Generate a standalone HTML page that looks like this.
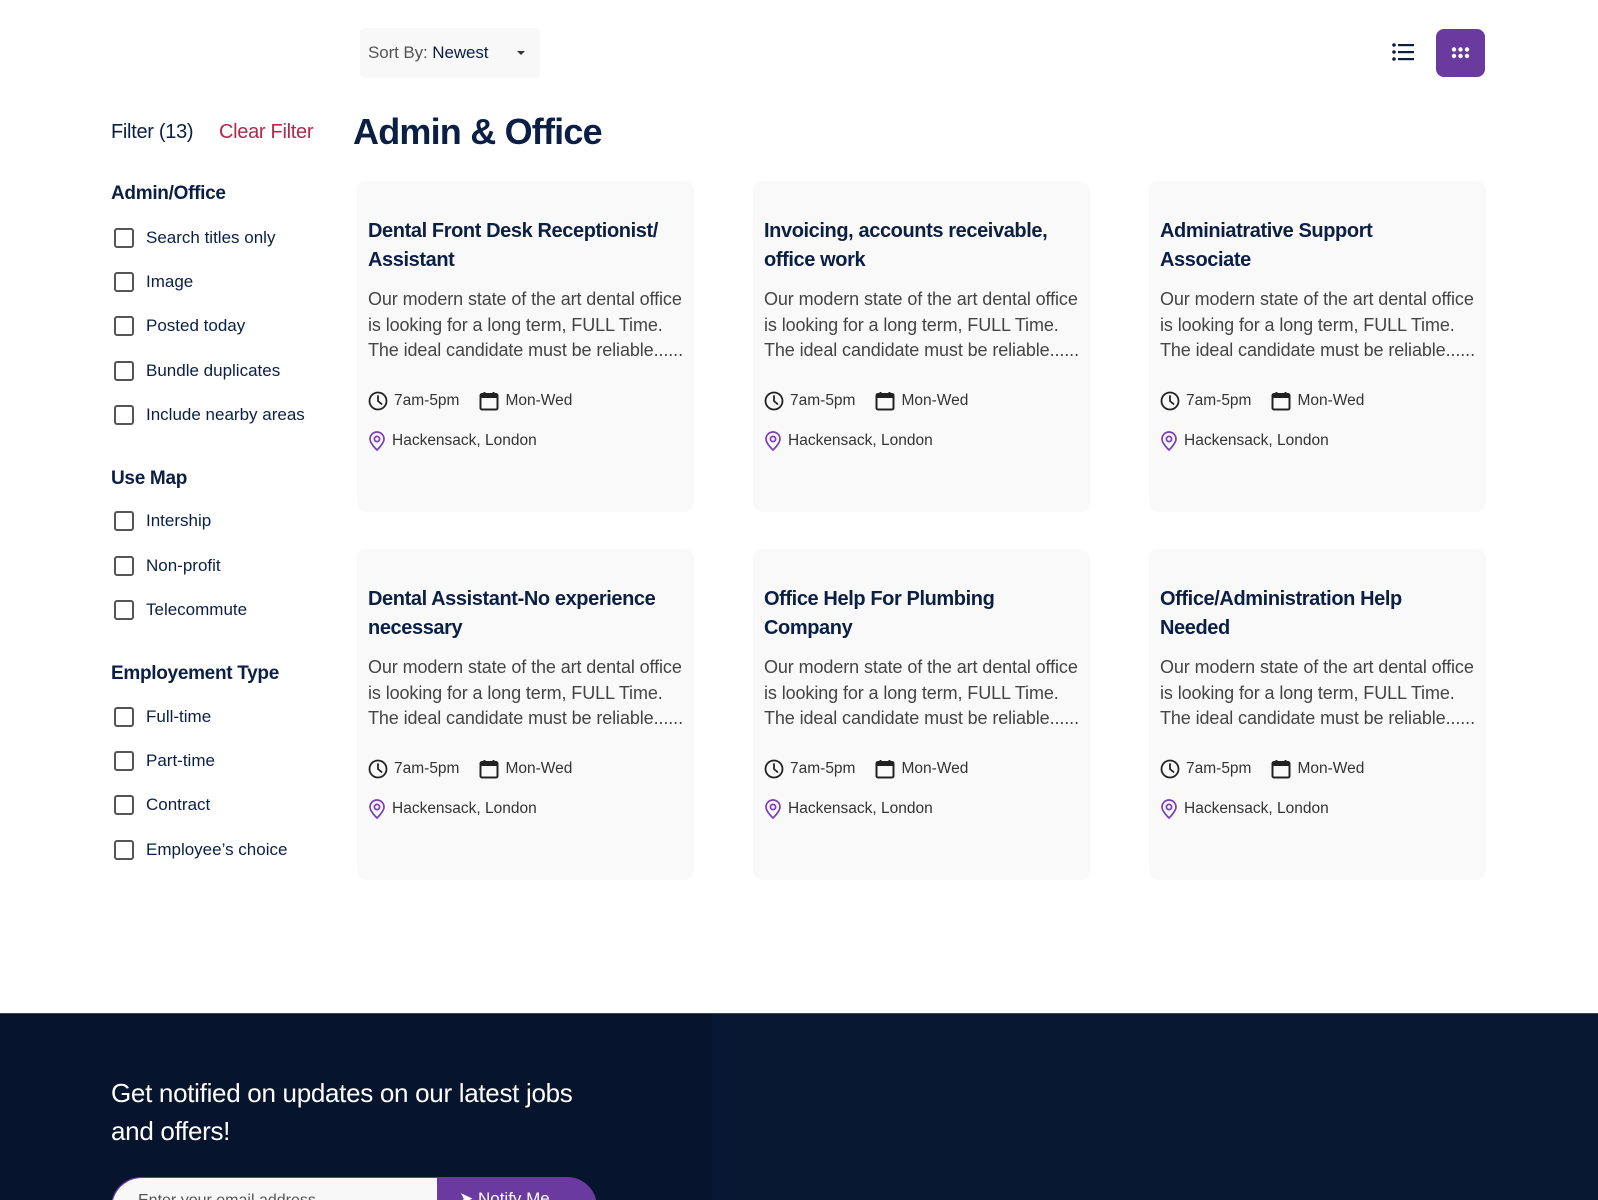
<!DOCTYPE html>
<html style="overflow:hidden;height:1200px"><head><meta charset="utf-8">
<style>
*{margin:0;padding:0;box-sizing:border-box}
body{width:1598px;height:1200px;overflow:hidden;background:#fff;font-family:"Liberation Sans",sans-serif;position:relative;color:#0b1f45}
.abs{position:absolute;white-space:nowrap}
.sort{left:360px;top:28px;width:180px;height:50px;background:#f8f8f8;border-radius:4px;font-size:17px;line-height:50px;padding-left:8px;color:#555;letter-spacing:-0.1px}
.sort b{font-weight:normal;color:#0b1f45}
.caret{position:absolute;left:157px;top:23px;border-left:4px solid transparent;border-right:4px solid transparent;border-top:4px solid #333}
.grid{left:1436px;top:29px;width:49px;height:48px;background:#6b3a9e;border-radius:8px}
.card{position:absolute;width:337px;height:331px;background:#f9f9f9;border-radius:10px}
.card h3{position:absolute;left:11px;top:36px;font-size:20px;line-height:29px;font-weight:bold;color:#0b1f45;letter-spacing:-0.4px;white-space:nowrap}
.card p{position:absolute;left:11px;top:106px;font-size:18px;line-height:25.5px;color:#444;letter-spacing:-0.1px;white-space:nowrap}
.meta{position:absolute;left:11px;top:210px;font-size:15.5px;color:#333;display:flex;align-items:center;white-space:nowrap}
.loc{position:absolute;left:11px;top:250px;font-size:15.5px;color:#333;display:flex;align-items:center;white-space:nowrap}
.meta svg,.loc svg{margin-right:6px}
.sh{font-size:19px;font-weight:bold;color:#0b1f45;letter-spacing:-0.3px}
.cb{position:absolute;left:114px;width:20px;height:20px;border:2px solid #555;border-radius:3px}
.cl{position:absolute;left:146px;font-size:17px;color:#0b1f45;white-space:nowrap}
</style></head><body>

<div class="abs sort">Sort By: <b>Newest</b><span class="caret"></span></div>
<svg class="abs" style="left:1392px;top:43px" width="22" height="18" viewBox="0 0 22 18"><g fill="#0b1f45"><circle cx="2" cy="2" r="1.8"/><circle cx="2" cy="9" r="1.8"/><circle cx="2" cy="16" r="1.8"/><rect x="6" y="1" width="16" height="2.2"/><rect x="6" y="8" width="16" height="2.2"/><rect x="6" y="15" width="16" height="2.2"/></g></svg>
<div class="abs grid"><svg width="49" height="48" viewBox="0 0 49 48"><g fill="#fff"><circle cx="18" cy="20.5" r="2.2"/><circle cx="24.5" cy="20.5" r="2.2"/><circle cx="31" cy="20.5" r="2.2"/><circle cx="18" cy="27" r="2.2"/><circle cx="24.5" cy="27" r="2.2"/><circle cx="31" cy="27" r="2.2"/></g></svg></div>

<div class="abs" style="left:111px;top:121px;font-size:20px;color:#0b1f45;letter-spacing:-0.3px">Filter (13)</div>
<div class="abs" style="left:219px;top:121px;font-size:20px;color:#b3284a;letter-spacing:-0.3px">Clear Filter</div>
<div class="abs" style="left:353px;top:111px;font-size:36px;font-weight:bold;color:#0b1f45;letter-spacing:-0.8px">Admin &amp; Office</div>

<div class="abs sh" style="left:111px;top:183px">Admin/Office</div>
<div class="cb" style="top:228px"></div><div class="cl" style="top:228px">Search titles only</div>
<div class="cb" style="top:272px"></div><div class="cl" style="top:272px">Image</div>
<div class="cb" style="top:316px"></div><div class="cl" style="top:316px">Posted today</div>
<div class="cb" style="top:361px"></div><div class="cl" style="top:361px">Bundle duplicates</div>
<div class="cb" style="top:405px"></div><div class="cl" style="top:405px">Include nearby areas</div>
<div class="abs sh" style="left:111px;top:468px">Use Map</div>
<div class="cb" style="top:511px"></div><div class="cl" style="top:511px">Intership</div>
<div class="cb" style="top:556px"></div><div class="cl" style="top:556px">Non-profit</div>
<div class="cb" style="top:600px"></div><div class="cl" style="top:600px">Telecommute</div>
<div class="abs sh" style="left:111px;top:663px">Employement Type</div>
<div class="cb" style="top:707px"></div><div class="cl" style="top:707px">Full-time</div>
<div class="cb" style="top:751px"></div><div class="cl" style="top:751px">Part-time</div>
<div class="cb" style="top:795px"></div><div class="cl" style="top:795px">Contract</div>
<div class="cb" style="top:840px"></div><div class="cl" style="top:840px">Employee’s choice</div>

<script>
var titles=[["Dental Front Desk Receptionist/","Assistant"],["Invoicing, accounts receivable,","office work"],["Adminiatrative Support","Associate"],["Dental Assistant-No experience","necessary"],["Office Help For Plumbing","Company"],["Office/Administration Help","Needed"]];
var xs=[357,753,1149],ys=[181,549];
var clock='<svg width="20" height="20" viewBox="0 0 20 20"><circle cx="10" cy="10" r="8.5" fill="none" stroke="#222" stroke-width="1.8"/><path d="M10 5v5l3.5 3" fill="none" stroke="#222" stroke-width="1.8" stroke-linecap="round"/></svg>';
var cal='<svg width="20" height="20" viewBox="0 0 20 20"><rect x="1.5" y="3" width="17" height="15.5" rx="1.5" fill="none" stroke="#222" stroke-width="2"/><rect x="1.5" y="3" width="17" height="4" fill="#222"/><path d="M5.5 1v3M14.5 1v3" stroke="#222" stroke-width="2"/></svg>';
var pin='<svg width="18" height="20" viewBox="0 0 18 20"><path d="M9 19s-7-6.5-7-11a7 7 0 0 1 14 0c0 4.5-7 11-7 11z" fill="none" stroke="#7a3fb5" stroke-width="1.7"/><circle cx="9" cy="8" r="2.6" fill="none" stroke="#7a3fb5" stroke-width="1.7"/></svg>';
var h='';
for(var i=0;i<6;i++){var x=xs[i%3],y=ys[Math.floor(i/3)];
h+='<div class="card" style="left:'+x+'px;top:'+y+'px"><h3>'+titles[i][0]+'<br>'+titles[i][1]+'</h3><p>Our modern state of the art dental office<br>is looking for a long term, FULL Time.<br>The ideal candidate must be reliable......</p><div class="meta">'+clock+'7am-5pm<span style="width:20px"></span>'+cal+'Mon-Wed</div><div class="loc">'+pin+'Hackensack, London</div></div>';}
document.write(h);
</script>

<div class="abs" style="left:0;top:1013px;width:1598px;height:187px;background:#081732;border-top:1px solid #3a4458;overflow:hidden">
<div style="position:absolute;left:0;top:0;width:712px;height:187px;background:#06142e"></div>
<div style="position:absolute;left:111px;top:60px;font-size:26px;line-height:38px;color:#fff;letter-spacing:-0.3px;white-space:nowrap">Get notified on updates on our latest jobs<br>and offers!</div>
<div style="position:absolute;left:111px;top:163px;width:486px;height:60px;border-radius:30px;background:#6b3a9e;overflow:hidden">
<div style="position:absolute;left:1px;top:1px;width:325px;height:60px;background:#f8f8f8;border-radius:30px 0 0 30px;font-size:16px;color:#555;padding:14px 0 0 26px;white-space:nowrap">Enter your email address</div>
<div style="position:absolute;left:348px;top:12px;color:#fff;font-size:17px;white-space:nowrap">➤ Notify Me</div>
</div>
</div>
</body></html>
